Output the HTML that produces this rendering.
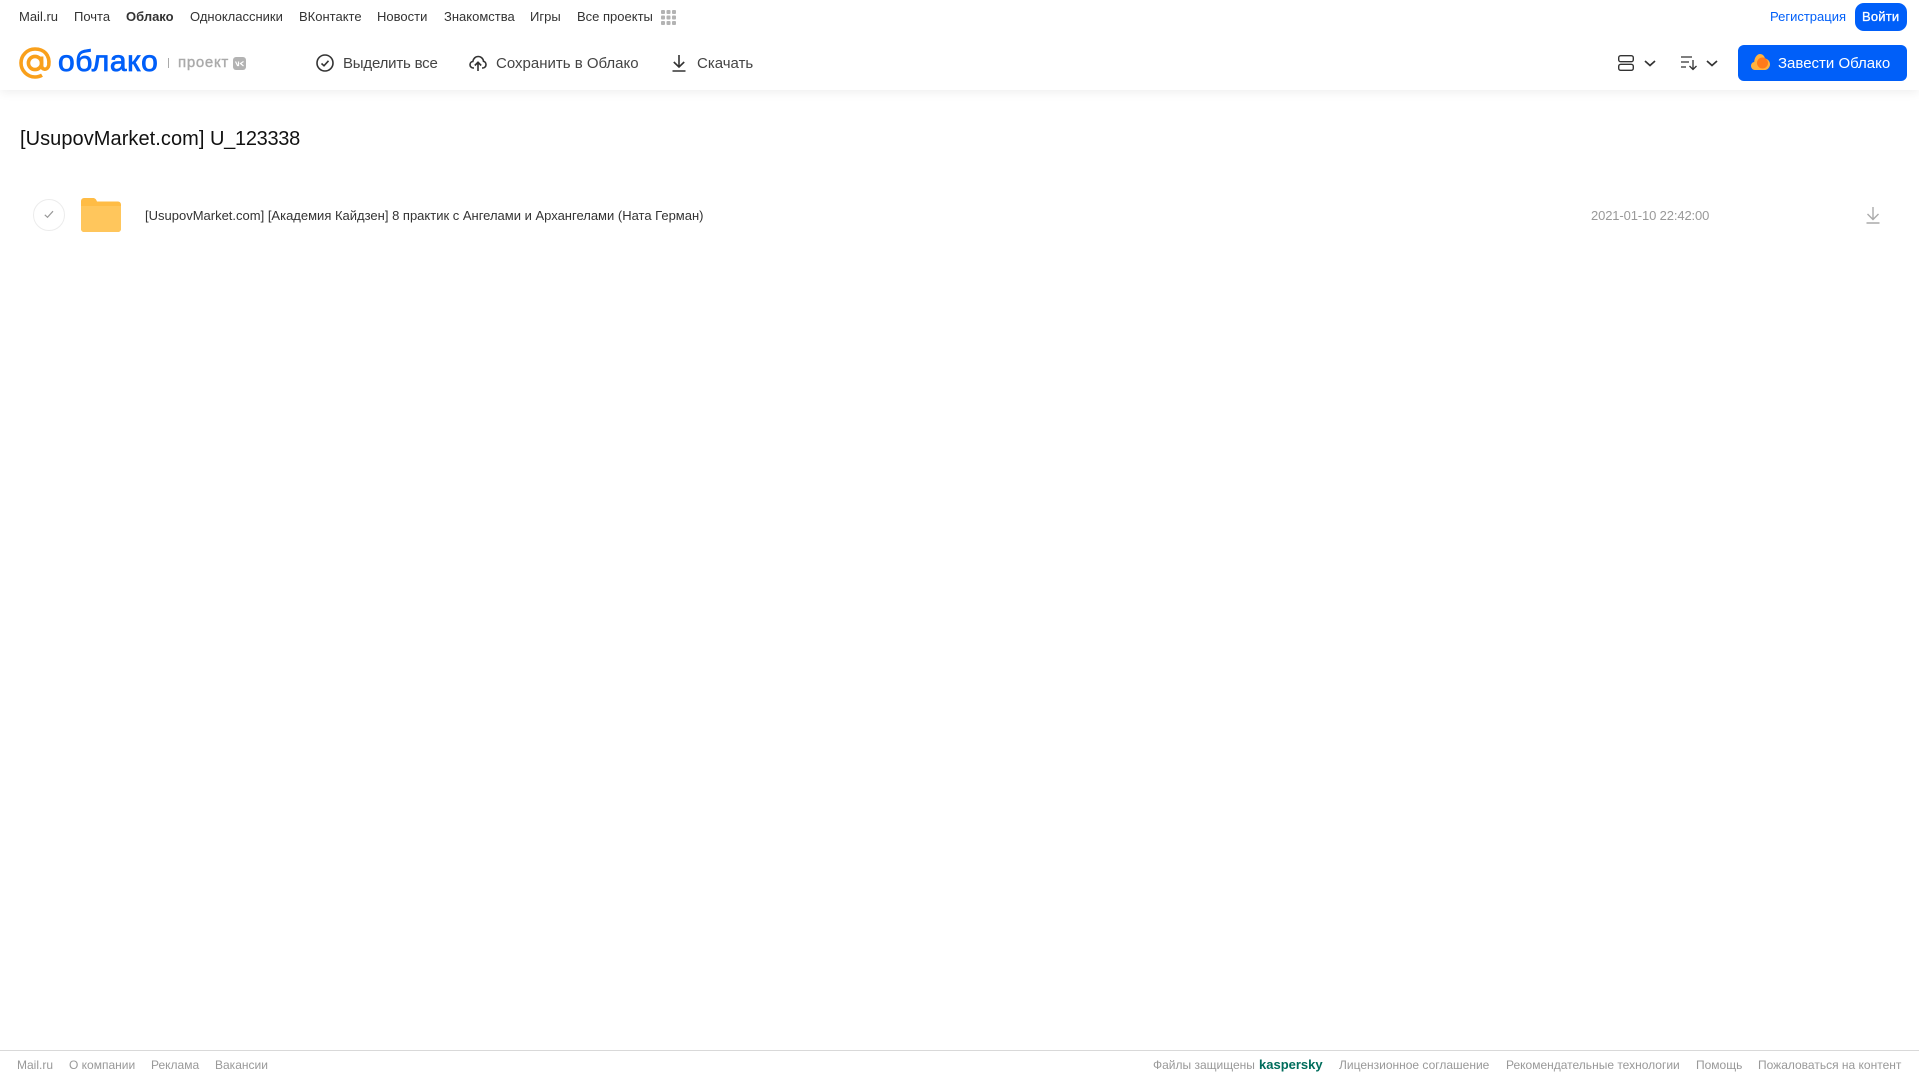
<!DOCTYPE html>
<html lang="ru"><head><meta charset="utf-8"><title>Облако</title>
<style>
html,body{margin:0;padding:0;background:#fff;width:1919px;height:1079px;overflow:hidden}
body{position:relative;font-family:"Liberation Sans",Arial,sans-serif}
.t{position:absolute;white-space:nowrap;display:block;transform-origin:left center}
.n{top:9px;font-size:13px;line-height:15px;color:#333}
.b{top:54px;font-size:15px;line-height:20px;color:#444}
.f{top:1058px;font-size:12px;line-height:15px;color:#999}
svg{position:absolute;display:block;overflow:visible}
</style></head><body>
<div style="position:absolute;left:0;top:0;width:1919px;height:90px;background:#fff;box-shadow:0 2px 10px rgba(0,0,0,.07)"></div>

<span class="t n" style="left:19px">Mail.ru</span>
<span class="t n" style="left:74px">Почта</span>
<span class="t n" style="left:126px;font-weight:bold">Облако</span>
<span class="t n" style="left:190px">Одноклассники</span>
<span class="t n" style="left:299px">ВКонтакте</span>
<span class="t n" style="left:377px">Новости</span>
<span class="t n" style="left:444px">Знакомства</span>
<span class="t n" style="left:530px">Игры</span>
<span class="t n" style="left:577px">Все проекты</span>
<svg style="left:661px;top:10px" width="15" height="15" fill="#b3b3b3"><rect width="4" height="4" rx="1"/><rect x="5.500" width="4" height="4" rx="1"/><rect x="11" width="4" height="4" rx="1"/><rect y="5.500" width="4" height="4" rx="1"/><rect x="5.500" y="5.500" width="4" height="4" rx="1"/><rect x="11" y="5.500" width="4" height="4" rx="1"/><rect y="11" width="4" height="4" rx="1"/><rect x="5.500" y="11" width="4" height="4" rx="1"/><rect x="11" y="11" width="4" height="4" rx="1"/></svg>

<svg style="left:19px;top:47px" width="33" height="33" viewBox="0 0 33 33" fill="none" stroke="#f9a01b" stroke-width="3.600"><circle cx="16" cy="16" r="6.600"/><path d="M22.600 9.500v9c0 5 6.400 5 7.200-.5C31 8 25 2 16 2 8.300 2 2 8.300 2 16s6.300 14 14 14c3 0 5-.6 7-1.800"/></svg>
<span class="t" style="left:58px;top:43px;font-size:30px;line-height:38px;color:#005ff9;letter-spacing:.6px;-webkit-text-stroke:.8px #005ff9">облако</span>
<div style="position:absolute;left:168px;top:58px;width:1px;height:10px;background:#aaa"></div>
<span class="t" style="left:178px;top:53px;font-size:15px;line-height:20px;color:#aaa;letter-spacing:.7px;-webkit-text-stroke:.4px #aaa">проект</span>
<div style="position:absolute;left:233px;top:57px;width:13px;height:13px;border-radius:3px;background:#b3b3b3"></div>
<svg style="left:233px;top:57px" width="13" height="13" fill="none" stroke="#fff" stroke-width="1.200"><path d="M2.500 4.500 4.500 8.500h1V4.500M10.500 4.500 7.500 6.500l3 2.500"/></svg>

<svg style="left:316px;top:54px" width="18" height="18" fill="none" stroke="#333" stroke-width="1.600"><circle cx="9" cy="9" r="8"/><path d="M5.500 9.500 8 11.800l4.500-5"/></svg>
<span class="t b" style="left:343px;letter-spacing:-.2px">Выделить все</span>
<svg style="left:469px;top:54px" width="18" height="18" viewBox="0 0 18 18" fill="none" stroke="#333" stroke-width="1.600"><path d="M5 14H4.500C2.500 14 1 12.500 1 10.700 1 9 2.200 7.700 3.800 7.500 4.300 4.500 6.500 2.500 9.200 2.500c2.800 0 5 2 5.300 4.800 1.500.3 2.500 1.700 2.500 3.300 0 1.900-1.500 3.400-3.500 3.400H13M9 17V8.500M5.800 11.500 9 8.300l3.200 3.200"/></svg>
<span class="t b" style="left:496px">Сохранить в Облако</span>
<svg style="left:672px;top:54px" width="14" height="18" fill="none" stroke="#333" stroke-width="1.600"><path d="M7 1v12M1.800 8 7 13l5.200-5M.5 17h13"/></svg>
<span class="t b" style="left:697px">Скачать</span>

<span class="t n" style="left:1770px;color:#005ff9">Регистрация</span>
<div style="position:absolute;left:1855px;top:3px;width:52px;height:28px;border-radius:9px;background:#005ff9"></div>
<span class="t n" style="left:1862px;color:#fff;-webkit-text-stroke:.3px #fff;letter-spacing:.2px">Войти</span>

<svg style="left:1618px;top:55px" width="16" height="16" fill="none" stroke="#333" stroke-width="1.400"><rect x=".7" y=".7" width="14.600" height="6" rx="2"/><rect x=".7" y="9.300" width="14.600" height="6" rx="2"/></svg>
<svg style="left:1644px;top:60px" width="12" height="7" fill="none" stroke="#333" stroke-width="1.700"><path d="M1 1l5 4.500L11 1"/></svg>
<svg style="left:1681px;top:56px" width="16" height="14" fill="none" stroke="#333" stroke-width="1.300"><path d="M0 1h11M0 6h8M0 11h5M12 4v9M8.500 10l3.500 3.500 3.500-3.500"/></svg>
<svg style="left:1706px;top:60px" width="12" height="7" fill="none" stroke="#333" stroke-width="1.700"><path d="M1 1l5 4.500L11 1"/></svg>

<div style="position:absolute;left:1738px;top:45px;width:169px;height:36px;border-radius:6px;background:#005ff9"></div>
<svg style="left:1751px;top:54px" width="19" height="17"><path fill="#ffb23e" d="M4 16C1.500 16 0 14 0 11.800 0 9.800 1.400 8.200 3.200 8 3.500 3.500 6 0 9 0c2.700 0 4.500 2 5 4.500 2.700.4 5 2.800 5 5.800S16.500 16 14 16z"/><circle cx="11.500" cy="9" r="5.500" fill="#ff7a1a"/></svg>
<span class="t b" style="left:1778px;color:#fff">Завести Облако</span>

<span class="t" style="left:20px;top:126px;font-size:20px;line-height:26px;color:#111"><span style="letter-spacing:.06px">[UsupovMarket.com]</span> <span style="letter-spacing:-.3px">U_123338</span></span>

<div style="position:absolute;left:33px;top:199px;width:30px;height:30px;border:1px solid #ececec;border-radius:50%"></div>
<svg style="left:44px;top:210px" width="10" height="9" fill="none" stroke="#999" stroke-width="1.200"><path d="M.8 4.800 3.500 7.300 9 1.200"/></svg>
<svg style="left:81px;top:198px" width="40" height="34"><path fill="#ffbc45" d="M0 3a3 3 0 0 1 3-3h9c2 0 3 1 4 3.500h21a3 3 0 0 1 3 3V31a3 3 0 0 1-3 3H3a3 3 0 0 1-3-3z"/><path fill="#ffc65c" d="M0 8h40v23a3 3 0 0 1-3 3H3a3 3 0 0 1-3-3z"/></svg>
<span class="t" style="left:145px;top:208px;font-size:13px;line-height:15px;color:#333">[UsupovMarket.com] [Академия Кайдзен] 8 практик с Ангелами и Архангелами (Ната Герман)</span>
<span class="t" style="left:1591px;top:208px;font-size:13px;line-height:15px;color:#999;letter-spacing:-.13px">2021-01-10 22:42:00</span>
<svg style="left:1866px;top:207px" width="14" height="17" fill="none" stroke="#aaa" stroke-width="1.400"><path d="M7 0v12M1.500 7 7 12.500 12.500 7M.5 16h13"/></svg>

<div style="position:absolute;left:0;top:1050px;width:1919px;height:1px;background:#d9d9d9"></div>
<span class="t f" style="left:17px">Mail.ru</span>
<span class="t f" style="left:69px">О компании</span>
<span class="t f" style="left:151px">Реклама</span>
<span class="t f" style="left:215px">Вакансии</span>
<span class="t f" style="left:1153px">Файлы защищены</span>
<span class="t f" style="left:1259px;font-weight:bold;color:#006d5c;font-size:13px;top:1057px">kaspersky</span>
<span class="t f" style="left:1339px">Лицензионное соглашение</span>
<span class="t f" style="left:1506px">Рекомендательные технологии</span>
<span class="t f" style="left:1696px">Помощь</span>
<span class="t f" style="left:1758px">Пожаловаться на контент</span>
</body></html>
